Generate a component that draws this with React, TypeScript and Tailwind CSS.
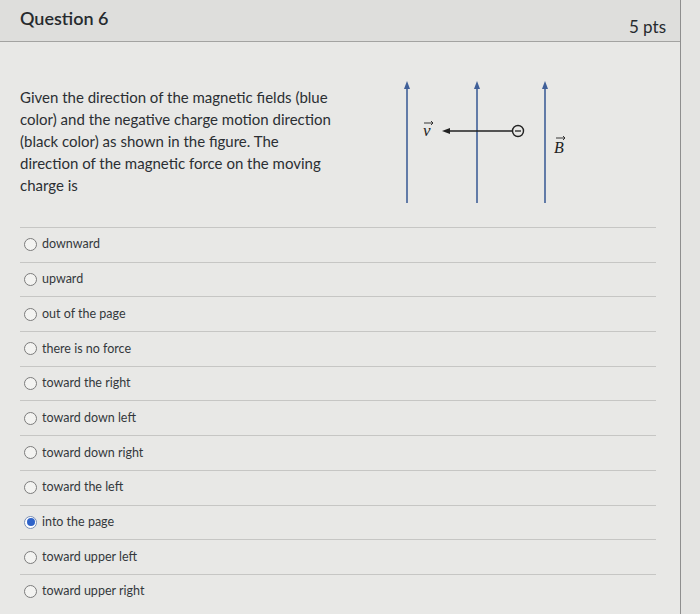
const options = [
  "downward",
  "upward",
  "out of the page",
  "there is no force",
  "toward the right",
  "toward down left",
  "toward down right",
  "toward the left",
  "into the page",
  "toward upper left",
  "toward upper right",
];

const selected = "into the page";

function FieldFigure() {
  const blue = "#3f5f98";
  const fieldX = [12, 82, 150];
  return (
    <svg width="190" height="132" viewBox="0 0 190 132" className="shrink-0">
      {fieldX.map((x) => (
        <g key={x}>
          <line x1={x} y1={7} x2={x} y2={125} stroke={blue} strokeWidth={1.6} />
          <path d={`M${x - 3} ${11} L${x} ${3} L${x + 3} ${11} Z`} fill={blue} />
        </g>
      ))}
      {/* velocity arrow */}
      <line x1={54} y1={53} x2={117} y2={53} stroke="#222" strokeWidth={1.6} />
      <path d="M47 53 L55 50 L55 56 Z" fill="#222" />
      <circle cx={123} cy={53} r={5.5} fill="none" stroke="#222" strokeWidth={1.4} />
      <line x1={120} y1={53} x2={126} y2={53} stroke="#222" strokeWidth={1.3} />
      {/* v label */}
      <text x={28} y={58} fontFamily="'Liberation Serif', serif" fontStyle="italic" fontSize={17} fill="#222">
        v
      </text>
      <path d="M29 45 L38 45 M36 43 L38 45 L36 47" stroke="#222" strokeWidth={0.9} fill="none" />
      {/* B label */}
      <text x={159} y={75} fontFamily="'Liberation Serif', serif" fontStyle="italic" fontSize={16} fill="#222">
        B
      </text>
      <path d="M161 60 L170 60 M168 58 L170 60 L168 62" stroke="#222" strokeWidth={0.9} fill="none" />
    </svg>
  );
}

function Radio({ checked }: { checked: boolean }) {
  if (checked) {
    return (
      <span className="flex h-[13px] w-[13px] items-center justify-center rounded-full border border-[#7a8fb5] bg-white">
        <span className="h-[8px] w-[8px] rounded-full bg-[#2f63c9]" />
      </span>
    );
  }
  return <span className="h-[13px] w-[13px] rounded-full border-[1.5px] border-[#7c7c7c] bg-[#f3f3f1]" />;
}

export default function App() {
  return (
    <div className="h-[614px] w-full overflow-hidden bg-[#e4e4e2] font-['Lato','Liberation_Sans',sans-serif] text-[#2b2f33]">
      <div className="h-full w-[681px] border-r border-[#8e8e8e] bg-[#e8e8e6]">
        <div className="flex h-[42px] justify-between border-b border-[#a3a3a1] bg-[#dededc] pr-[14px] pl-5">
          <h1 className="pt-[5px] text-[18px] font-semibold text-[#262a2e]">Question 6</h1>
          <span className="pt-[14px] text-[17px] text-[#262a2e]">5 pts</span>
        </div>

        <div className="flex px-5 pt-[36px]">
          <p className="mt-2 w-[318px] text-[15px] leading-[22px] text-[#2b2f33]">
            Given the direction of the magnetic fields (blue color) and the negative charge motion
            direction (black color) as shown in the figure. The direction of the magnetic force on
            the moving charge is
          </p>
          <div className="ml-[57px]">
            <FieldFigure />
          </div>
        </div>

        <ul className="mx-5 mt-[17px] mr-[24px]">
          {options.map((opt) => (
            <li
              key={opt}
              className="flex h-[34.7px] items-center gap-[5px] border-t border-[#c6c6c4] pl-[4px]"
            >
              <Radio checked={opt === selected} />
              <span className="text-[12.5px] text-[#34383c]">{opt}</span>
            </li>
          ))}
        </ul>
      </div>
    </div>
  );
}
